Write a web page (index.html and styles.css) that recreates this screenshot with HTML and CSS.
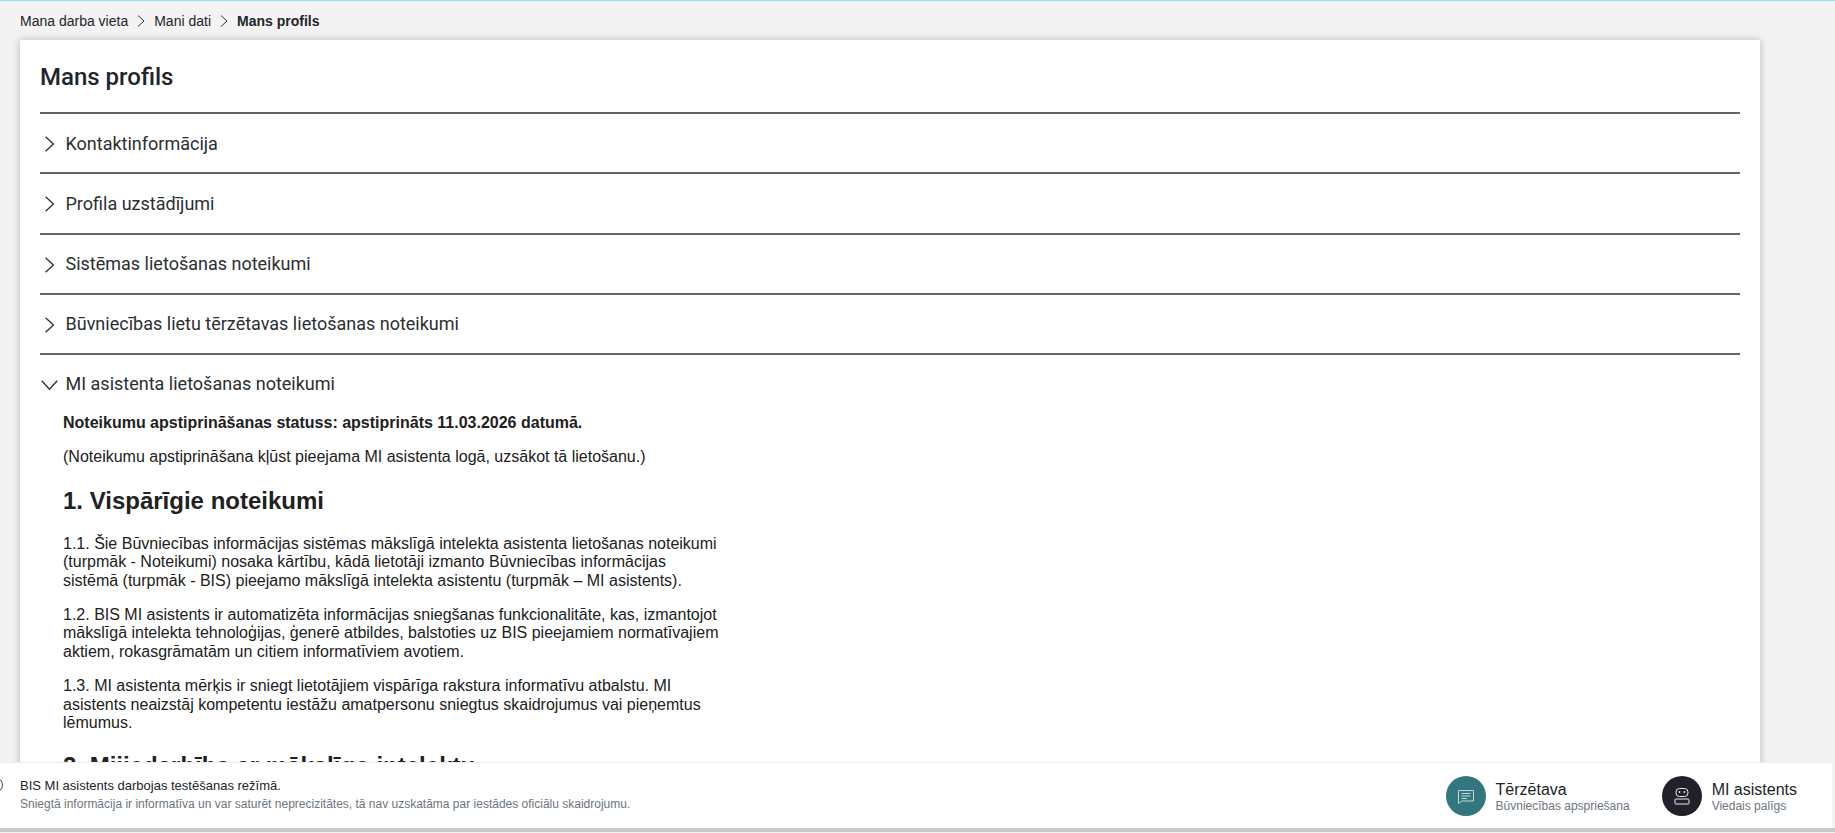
FILE: index.html
```html
<!DOCTYPE html>
<html lang="lv">
<head>
<meta charset="utf-8">
<title>Mans profils</title>
<link rel="stylesheet" href="styles.css">
</head>
<body>
<div class="page">
  <nav class="crumbs">
    <span>Mana darba vieta</span>
    <svg class="crumb-sep" viewBox="0 0 10 14"><path d="M2 1.500 8 7l-6 5.500"/></svg>
    <span>Mani dati</span>
    <svg class="crumb-sep" viewBox="0 0 10 14"><path d="M2 1.500 8 7l-6 5.500"/></svg>
    <strong>Mans profils</strong>
  </nav>
  <main class="card">
    <h1 class="title">Mans profils</h1>
    <div class="acc-row"><svg class="chev" viewBox="0 0 14 16"><path d="M3.500 1.500 10.500 8l-7 6.500"/></svg><span>Kontaktinformācija</span></div>
    <div class="acc-row"><svg class="chev" viewBox="0 0 14 16"><path d="M3.500 1.500 10.500 8l-7 6.500"/></svg><span>Profila uzstādījumi</span></div>
    <div class="acc-row"><svg class="chev" viewBox="0 0 14 16"><path d="M3.500 1.500 10.500 8l-7 6.500"/></svg><span>Sistēmas lietošanas noteikumi</span></div>
    <div class="acc-row"><svg class="chev" viewBox="0 0 14 16"><path d="M3.500 1.500 10.500 8l-7 6.500"/></svg><span>Būvniecības lietu tērzētavas lietošanas noteikumi</span></div>
    <div class="acc-row open"><svg class="chev" viewBox="0 0 16 14"><path d="M1.500 3.500 8 10.500l6.500-7"/></svg><span>MI asistenta lietošanas noteikumi</span></div>
    <article class="terms">
      <p><b>Noteikumu apstiprināšanas statuss: apstiprināts 11.03.2026 datumā.</b></p>
      <p>(Noteikumu apstiprināšana kļūst pieejama MI asistenta logā, uzsākot tā lietošanu.)</p>
      <h2>1. Vispārīgie noteikumi</h2>
      <p>1.1. Šie Būvniecības informācijas sistēmas mākslīgā intelekta asistenta lietošanas noteikumi (turpmāk - Noteikumi) nosaka kārtību, kādā lietotāji izmanto Būvniecības informācijas sistēmā (turpmāk - BIS) pieejamo mākslīgā intelekta asistentu (turpmāk – MI asistents).</p>
      <p>1.2. BIS MI asistents ir automatizēta informācijas sniegšanas funkcionalitāte, kas, izmantojot mākslīgā intelekta tehnoloģijas, ģenerē atbildes, balstoties uz BIS pieejamiem normatīvajiem aktiem, rokasgrāmatām un citiem informatīviem avotiem.</p>
      <p>1.3. MI asistenta mērķis ir sniegt lietotājiem vispārīga rakstura informatīvu atbalstu. MI asistents neaizstāj kompetentu iestāžu amatpersonu sniegtus skaidrojumus vai pieņemtus lēmumus.</p>
      <h2>2. Mijiedarbība ar mākslīgo intelektu</h2>
    </article>
  </main>
</div>
<footer class="bar">
  <span class="info-dot"></span>
  <div class="notice">
    <div class="notice-main">BIS MI asistents darbojas testēšanas režīmā.</div>
    <div class="notice-sub">Sniegtā informācija ir informatīva un var saturēt neprecizitātes, tā nav uzskatāma par iestādes oficiālu skaidrojumu.</div>
  </div>
  <div class="tool tool-chat">
    <span class="tool-icon teal">
      <svg viewBox="0 0 20 20"><path d="M2.500 4.500h15v10.500H6l-3.500 2.500z"/><path d="M5.500 7.500h9M5.500 10h9M5.500 12.500h5.500"/></svg>
    </span>
    <div class="tool-text"><div class="tool-name">Tērzētava</div><div class="tool-sub">Būvniecības apspriešana</div></div>
  </div>
  <div class="tool">
    <span class="tool-icon dark">
      <svg viewBox="0 0 20 20"><rect x="4" y="2.500" width="12" height="8" rx="3.500"/><circle class="eye" cx="7.500" cy="6" r=".9"/><circle class="eye" cx="12.500" cy="6" r=".9"/><rect x="3" y="13" width="14" height="5" rx=".8"/></svg>
    </span>
    <div class="tool-text"><div class="tool-name">MI asistents</div><div class="tool-sub">Viedais palīgs</div></div>
  </div>
</footer>
<div class="bar-edge"></div>
</body>
</html>
```
FILE: styles.css
```css
* { box-sizing: border-box; }
html, body { margin: 0; height: 100%; overflow: hidden; }
body {
  background: #f3f3f3;
  font-family: "Liberation Sans", Arial, sans-serif;
  color: #212529;
  border-top: 1px solid #8fdcff;
}
.page { padding: 0 75px 0 20px; height: 761px; overflow: hidden; }
.crumbs {
  height: 39px;
  display: flex;
  align-items: center;
  gap: 8px;
  font-size: 14px;
}
.crumb-sep { width: 10px; height: 14px; fill: none; stroke: #333; stroke-width: 1; }
.card {
  background: #fff;
  padding: 0 20px;
  box-shadow: 0 0 8px rgba(0,0,0,.25);
  min-height: 900px;
}
.title {
  margin: 0;
  height: 72px;
  display: flex;
  align-items: center;
  padding-top: 1px;
  font: 500 24px Roboto, sans-serif;
  color: #212529;
}
.acc-row {
  height: 60.250px;
  border-top: 2px solid #666;
  display: flex;
  align-items: center;
  gap: 6.500px;
  font: 400 18px Roboto, sans-serif;
  color: #2b2f33;
}
.acc-row.open { height: 59px; }
.chev { width: 19px; height: 18px; flex: none; fill: none; stroke: #333; stroke-width: 1.200; margin-top: 2px; }
.terms { padding: 2px 0 0 23px; width: 683px; font-size: 16px; line-height: 18.400px; color: #212121; }
.terms p { margin: 0 0 16px; }
.terms h2 { margin: 20px 0 20px; font-size: 24px; line-height: 28px; font-weight: 700; }
.bar {
  position: relative;
  width: 1832px;
  height: 66px;
  background: #fff;
  border-top: 1px solid #eee;
  display: flex;
  align-items: center;
  padding-right: 35px;
  overflow: hidden;
}
.bar-edge { height: 4px; background: #c8c8c8; }
.info-dot {
  position: absolute;
  left: -13px;
  top: 14px;
  width: 16px;
  height: 16px;
  border: 1px solid #444;
  border-radius: 50%;
}
.notice { margin: 0 0 3px 20px; flex: 1; }
.notice-main { font-size: 13px; line-height: 18px; color: #212529; }
.notice-sub { font-size: 12px; line-height: 16px; margin-top: 1px; color: #6c757d; }
.tool { display: flex; align-items: center; gap: 10px; }
.tool-chat { margin-right: 32px; }
.tool-icon {
  width: 40px;
  height: 40px;
  border-radius: 50%;
  display: flex;
  align-items: center;
  justify-content: center;
}
.tool-icon svg { width: 20px; height: 20px; fill: none; stroke: #e4eeee; stroke-width: 1; }
.teal { background: #33767f; }
.teal svg { opacity: .8; }
.dark { background: #231f2b; }
.eye { fill: #e4eeee; stroke: none; }
.tool-text { margin-top: 2px; }
.tool-name { font-size: 16px; line-height: 18px; color: #212529; }
.tool-sub { font-size: 12px; line-height: 14px; color: #6c757d; }
```
